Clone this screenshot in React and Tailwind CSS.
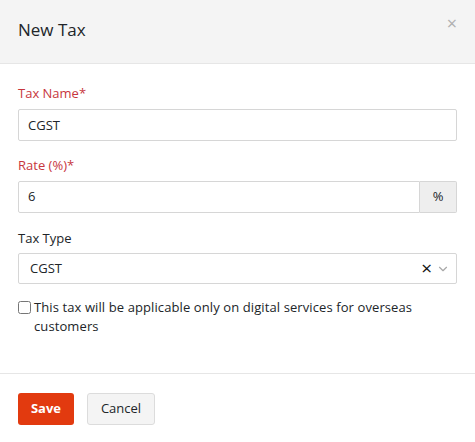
import React from "react";
import { ChevronDown } from "lucide-react";

const App = () => {
  return (
    <div className="w-[475px] h-[442px] bg-white text-[#212529] text-[13px]" style={{ fontFamily: "'Open Sans', 'Liberation Sans', sans-serif" }}>
      {/* Header */}
      <div className="h-[64px] bg-[#f4f4f4] border-b border-[#e6e6e6] px-[18px] flex items-start justify-between">
        <h3 className="text-[17px] leading-[22px] mt-[19px] text-[#212529]">New Tax</h3>
        <button className="mt-[14px] text-[#b0b0b0] text-[18px] leading-none">×</button>
      </div>

      {/* Body */}
      <div className="px-[18px] pt-[20px] pb-[37px]">
        <label className="block leading-[18px] text-[#c7363d]">Tax Name*</label>
        <input
          className="mt-[7px] w-full h-[32px] border border-[#d6d6d6] rounded-[2px] px-[9px] text-[13px] text-[#212529] outline-none"
          defaultValue="CGST"
        />

        <label className="block mt-[15px] leading-[18px] text-[#c7363d]">Rate (%)*</label>
        <div className="mt-[7px] flex h-[32px]">
          <input
            className="flex-1 min-w-0 border border-[#d6d6d6] rounded-l-[2px] px-[9px] text-[13px] text-[#212529] outline-none"
            defaultValue="6"
          />
          <span className="w-[37px] flex items-center justify-center bg-[#eeeeee] border border-l-0 border-[#d6d6d6] rounded-r-[2px] text-[#212529]">%</span>
        </div>

        <label className="block mt-[16px] leading-[18px] text-[#212529]">Tax Type</label>
        <div className="mt-[6px] h-[31px] border border-[#d6d6d6] rounded-[2px] flex items-center pl-[11px] pr-[6px]">
          <span className="flex-1">CGST</span>
          <span className="text-[19px] leading-none text-[#111] mr-[4px]">×</span>
          <ChevronDown className="w-[14px] h-[14px] text-[#a8a8a8]" strokeWidth={2} />
        </div>

        <label className="mt-[14px] flex items-start leading-[19px]">
          <input type="checkbox" className="mt-[3px] mr-[3px] w-[13px] h-[13px] shrink-0" />
          <span className="tracking-[0.1px]">This tax will be applicable only on digital services for overseas<br />customers</span>
        </label>
      </div>

      {/* Footer */}
      <div className="border-t border-[#e6e6e6] px-[18px] pt-[19px] flex gap-[13px]">
        <button className="h-[32px] w-[56px] rounded-[3px] bg-[#e23a0f] text-white font-bold text-[13px]">Save</button>
        <button className="h-[32px] w-[68px] rounded-[3px] bg-[#f4f4f4] border border-[#dcdcdc] text-[#212529] text-[13px]">Cancel</button>
      </div>
    </div>
  );
};

export default App;
